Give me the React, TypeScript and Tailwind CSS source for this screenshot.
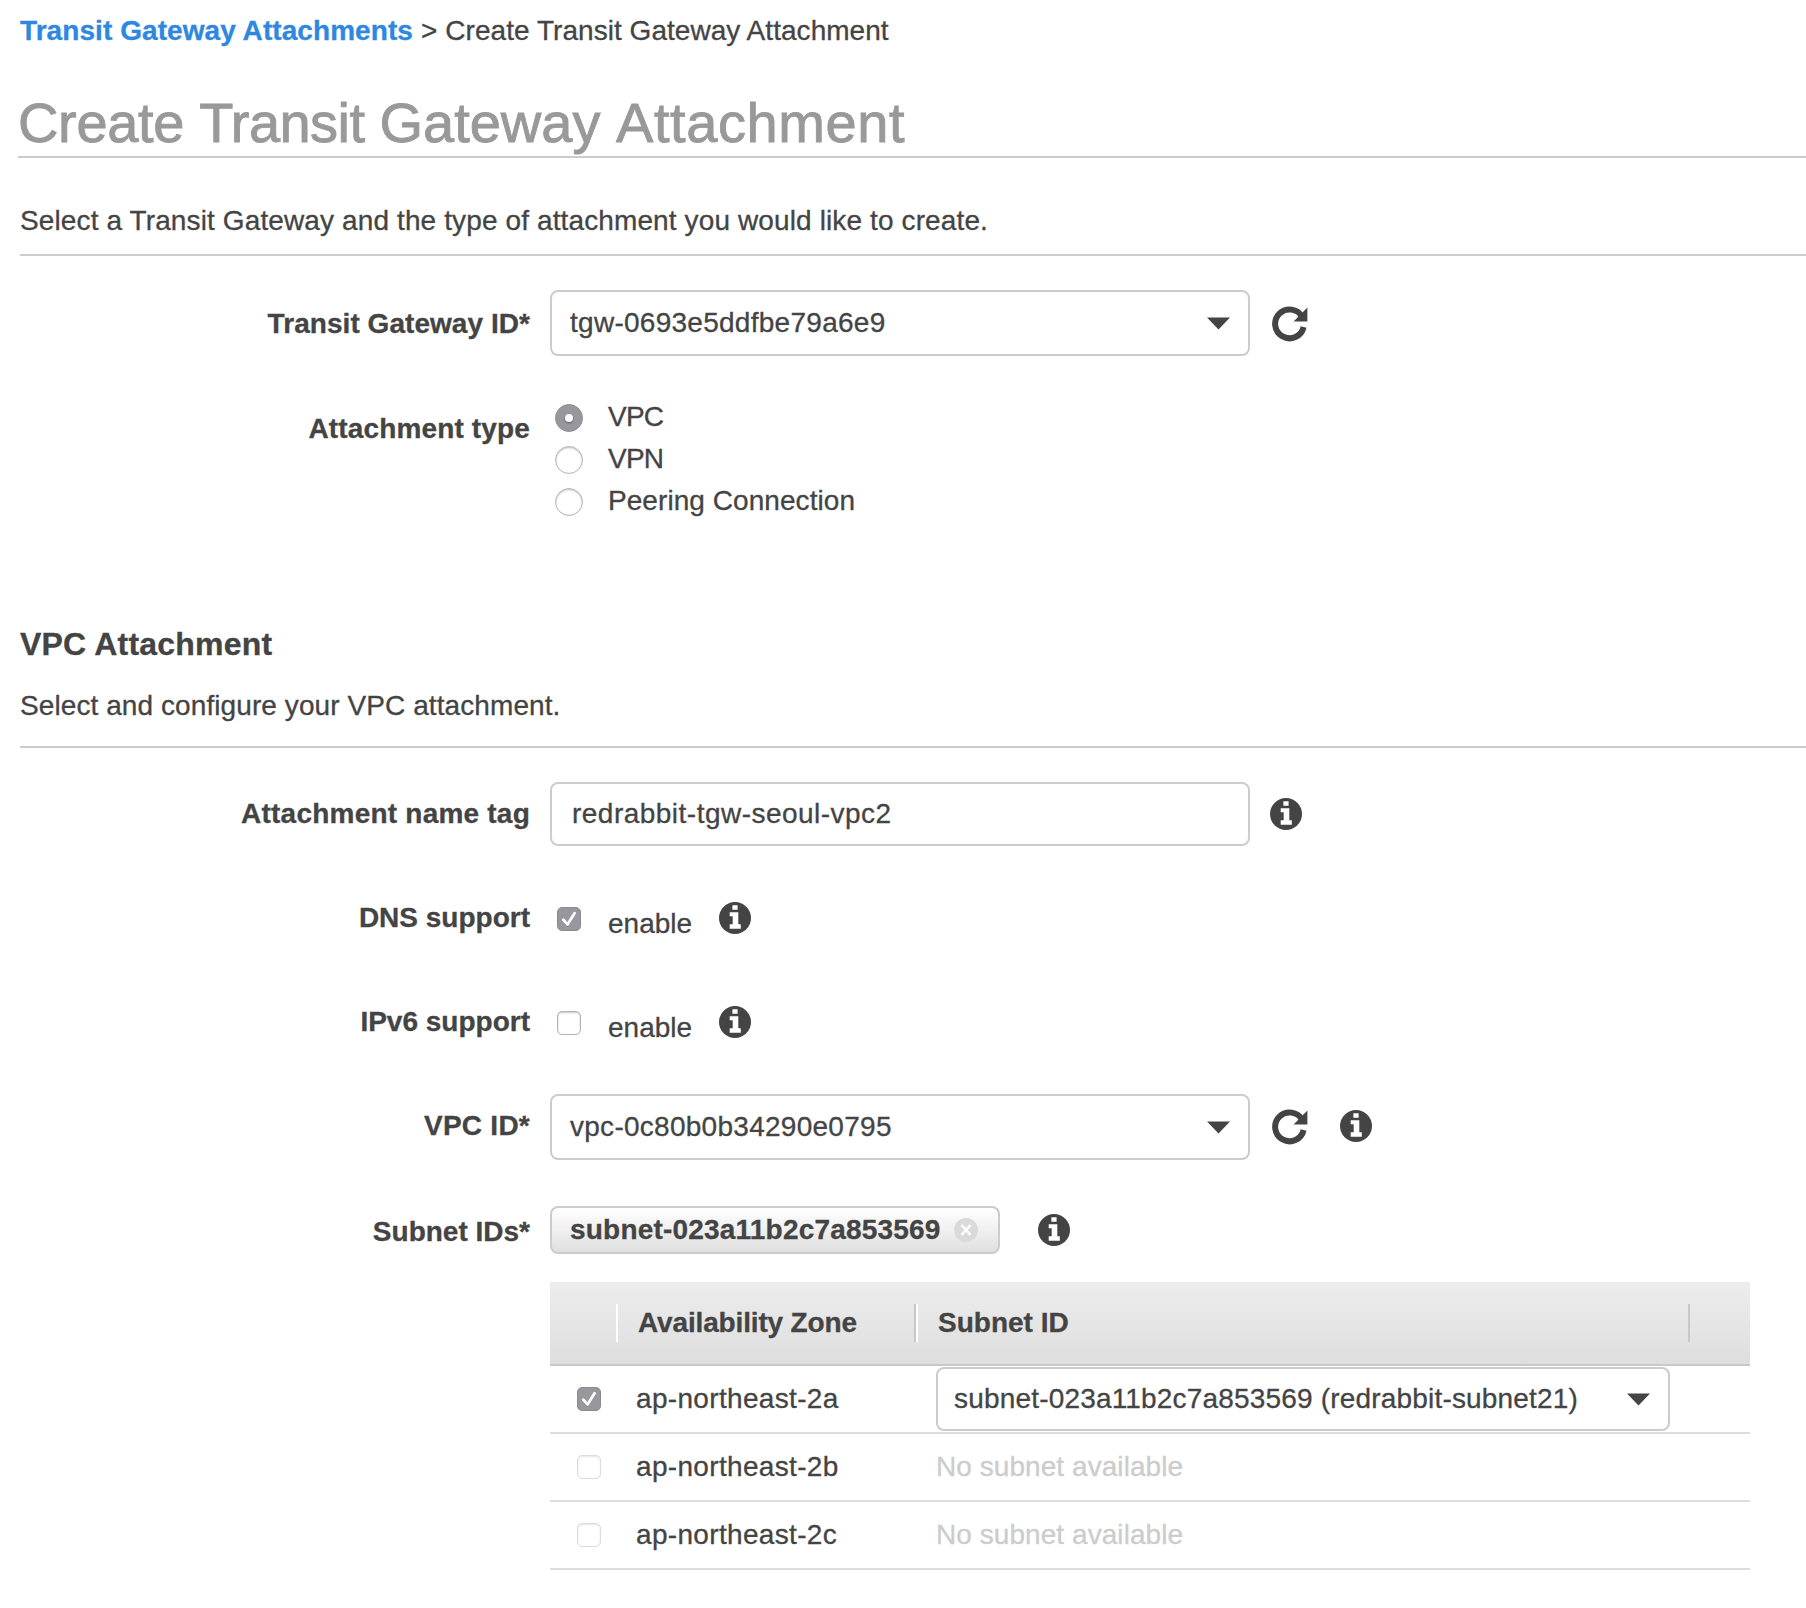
import React, { ReactNode } from "react";

function InfoIcon({ className = "" }: { className?: string }) {
  return (
    <svg viewBox="0 0 32 32" className={`h-8 w-8 shrink-0 ${className}`}>
      <circle cx="16" cy="16" r="16" fill="#444" />
      <path
        fill="#fff"
        d="M13.4 3.3h5.2v4.5h-5.2zM10.7 10.3h8.6v12h2.5v4.4H10.7v-4.4h3v-8.1h-3z"
      />
    </svg>
  );
}

function RefreshIcon({ className = "" }: { className?: string }) {
  return (
    <svg viewBox="0 0 36 36" className={`h-9 w-9 shrink-0 ${className}`}>
      <path d="M31.6 21A14.4 14.4 0 1 1 30.2 11" fill="none" stroke="#444" strokeWidth="6" />
      <path d="M35.4 1.6v13.8H21.6z" fill="#444" />
    </svg>
  );
}

function Caret() {
  return (
    <svg viewBox="0 0 23 13" className="h-[13px] w-[23px] shrink-0">
      <path d="M0 0.5h23L11.5 12.6z" fill="#444" />
    </svg>
  );
}

function Checkbox({ checked = false, disabled = false }: { checked?: boolean; disabled?: boolean }) {
  if (checked) {
    return (
      <span className="flex h-6 w-6 shrink-0 items-center justify-center rounded-[5px] border border-[#8b8a90] bg-[#98979d]">
        <svg viewBox="0 0 24 24" className="h-6 w-6 shrink-0">
          <path d="M6.3 13.6l4.2 4.6L17.6 7" fill="none" stroke="#77767c" strokeOpacity=".5" strokeWidth="2.6" strokeLinecap="round" />
          <path d="M6.3 12.8l4.2 4.6L17.6 6.2" fill="none" stroke="#fff" strokeWidth="2.8" strokeLinecap="round" strokeLinejoin="round" />
        </svg>
      </span>
    );
  }
  return (
    <span
      className={`block h-6 w-6 shrink-0 rounded-[5px] border bg-white ${
        disabled
          ? "border-[#dcdcdc] shadow-[inset_0_1px_2px_rgba(0,0,0,0.1)]"
          : "border-[#b4b4b4] shadow-[inset_0_1px_2px_rgba(0,0,0,0.22)]"
      }`}
    />
  );
}

function Radio({ label, checked = false, className }: { label: string; checked?: boolean; className: string }) {
  return (
    <div className="flex h-[42px] items-center gap-[25px] pl-[5px]">
      {checked ? (
        <span className="flex h-7 w-7 items-center justify-center rounded-full border border-[#8f8e94] bg-[#98979d]">
          <span className="h-2 w-2 rounded-full bg-white shadow-[0_1px_2px_rgba(0,0,0,0.4)]" />
        </span>
      ) : (
        <span className="h-7 w-7 rounded-full border border-[#b4b4b4] bg-white shadow-[inset_0_1px_2px_rgba(0,0,0,0.25)]" />
      )}
      <span className={`pb-0.5 ${className}`}>{label}</span>
    </div>
  );
}

function Field({
  label,
  className,
  labelClassName = "",
  children,
}: {
  label: string;
  className: string;
  labelClassName?: string;
  children: ReactNode;
}) {
  return (
    <div className={`flex items-start gap-5 ${className}`}>
      <div className={`flex h-[66px] w-[530px] shrink-0 items-center justify-end font-bold ${labelClassName}`}>
        {label}
      </div>
      {children}
    </div>
  );
}

function Select({ value }: { value: string }) {
  return (
    <div className="flex h-[66px] w-[700px] items-center justify-between rounded-lg border-2 border-[#ccc] pr-[18px] pl-[18px]">
      <span className="tracking-[0.27px]">{value}</span>
      <Caret />
    </div>
  );
}

function ZoneRow({ zone, checked = false, children }: { zone: string; checked?: boolean; children: ReactNode }) {
  return (
    <div className="flex h-[68px] items-center border-b-2 border-[#ddd]">
      <div className="w-[86px] shrink-0 pl-[27px]">
        <Checkbox checked={checked} disabled={!checked} />
      </div>
      <div className="w-[300px] shrink-0 tracking-[0.33px]">{zone}</div>
      {children}
    </div>
  );
}

export default function App() {
  return (
    <main className="h-[1608px] w-full overflow-hidden bg-white font-['Liberation_Sans',Arial,sans-serif] text-[28px] leading-8 whitespace-nowrap text-[#444] [-webkit-text-stroke:0.3px]">
      <nav className="flex gap-2 pt-[15px] pl-5">
        <a className="font-bold tracking-[0.07px] text-[#2e87e0]">Transit Gateway Attachments</a>
        <span>&gt;</span>
        <span className="tracking-[0.04px]">Create Transit Gateway Attachment</span>
      </nav>
      <h1 className="mt-[43px] ml-[18px] h-[68px] border-b-2 border-[#ccc] text-[56px] leading-[65px] text-[#999] [-webkit-text-stroke:0.9px]">
        <span className="tracking-[-0.35px]">Create </span>
        <span className="tracking-[-0.55px]">Transit </span>
        <span>Gateway </span>
        <span className="tracking-[0.6px]">Attachment</span>
      </h1>
      <p className="mt-[47px] ml-5 h-[51px] border-b-2 border-[#ccc] tracking-[0.12px]">
        Select a Transit Gateway and the type of attachment you would like to create.
      </p>

      <Field label="Transit Gateway ID*" className="mt-[34px] h-[104px]" labelClassName="pt-px tracking-[0.05px]">
        <Select value="tgw-0693e5ddfbe79a6e9" />
        <RefreshIcon className="mt-4 ml-0.5" />
      </Field>
      <Field label="Attachment type" className="h-[232px]" labelClassName="pt-[3px] tracking-[0.15px]">
        <div className="pt-[3px]">
          <Radio label="VPC" className="tracking-[-0.8px]" checked />
          <Radio label="VPN" className="tracking-[-0.8px]" />
          <Radio label="Peering Connection" className="tracking-[0.06px]" />
        </div>
      </Field>

      <h2 className="ml-5 text-[32px] leading-9 font-bold tracking-[0.2px]">VPC Attachment</h2>
      <p className="mt-7 ml-5 h-[58px] border-b-2 border-[#ccc] tracking-[0.085px]">
        Select and configure your VPC attachment.
      </p>

      <Field label="Attachment name tag" className="mt-[33px] h-[104px]" labelClassName="tracking-[0.22px]">
        <div className="mt-px flex h-16 w-[700px] items-center rounded-lg border-2 border-[#ccc] pl-5 tracking-[0.48px]">
          redrabbit-tgw-seoul-vpc2
        </div>
        <InfoIcon className="mt-[17px]" />
      </Field>
      <Field label="DNS support" className="h-[104px]">
        <div className="flex items-start pt-[17px] pl-[7px]">
          <div className="pt-[5px]"><Checkbox checked /></div>
          <span className="ml-[27px] pt-1.5">enable</span>
          <InfoIcon className="ml-[27px]" />
        </div>
      </Field>
      <Field label="IPv6 support" className="h-[105px]">
        <div className="flex items-start pt-[17px] pl-[7px]">
          <div className="pt-[5px]"><Checkbox /></div>
          <span className="ml-[27px] pt-1.5">enable</span>
          <InfoIcon className="ml-[27px]" />
        </div>
      </Field>
      <Field label="VPC ID*" className="h-[105px]" labelClassName="pb-0.5 tracking-[0.25px]">
        <Select value="vpc-0c80b0b34290e0795" />
        <RefreshIcon className="mt-[15px] ml-0.5" />
        <InfoIcon className="mt-4 ml-3" />
      </Field>
      <Field label="Subnet IDs*" className="h-[83px]">
        <div className="mt-[7px] flex h-12 w-[450px] items-center rounded-lg border-2 border-[#ccc] bg-linear-to-b from-white to-[#e0e0e0] pl-[18px] font-bold">
          <span className="w-[384px] tracking-[0.2px]">subnet-023a11b2c7a853569</span>
          <svg viewBox="0 0 24 24" className="h-6 w-6 shrink-0">
            <circle cx="12" cy="12" r="12" fill="#dadada" />
            <path d="M7.5 7l9 10M16.5 7l-9 10" stroke="#fff" strokeWidth="2.6" />
          </svg>
        </div>
        <InfoIcon className="mt-[15px] ml-[18px]" />
      </Field>

      <section className="ml-[550px] w-[1200px]">
        <header className="flex h-[84px] items-center border-b-2 border-[#c8c8c8] bg-linear-to-b from-[#ededed] to-[#dedede] font-bold">
          <div className="h-[38px] w-[66px]" />
          <div className="flex h-[38px] w-[300px] items-center border-r-2 border-l-2 border-l-white border-r-[#c8c8c8] pl-5 tracking-[-0.15px]">
            Availability Zone
          </div>
          <div className="flex h-[38px] w-[774px] items-center border-r-2 border-l-2 border-l-white border-r-[#c8c8c8] pl-5">
            Subnet ID
          </div>
        </header>
        <ZoneRow zone="ap-northeast-2a" checked>
          <div className="flex h-16 w-[734px] items-center justify-between rounded-lg border-2 border-[#ccc] bg-white pr-[18px] pl-4">
            <span className="tracking-[0.18px]">subnet-023a11b2c7a853569 (redrabbit-subnet21)</span>
            <Caret />
          </div>
        </ZoneRow>
        <ZoneRow zone="ap-northeast-2b">
          <span className="tracking-[0.06px] text-[#ccc]">No subnet available</span>
        </ZoneRow>
        <ZoneRow zone="ap-northeast-2c">
          <span className="tracking-[0.06px] text-[#ccc]">No subnet available</span>
        </ZoneRow>
      </section>
    </main>
  );
}
